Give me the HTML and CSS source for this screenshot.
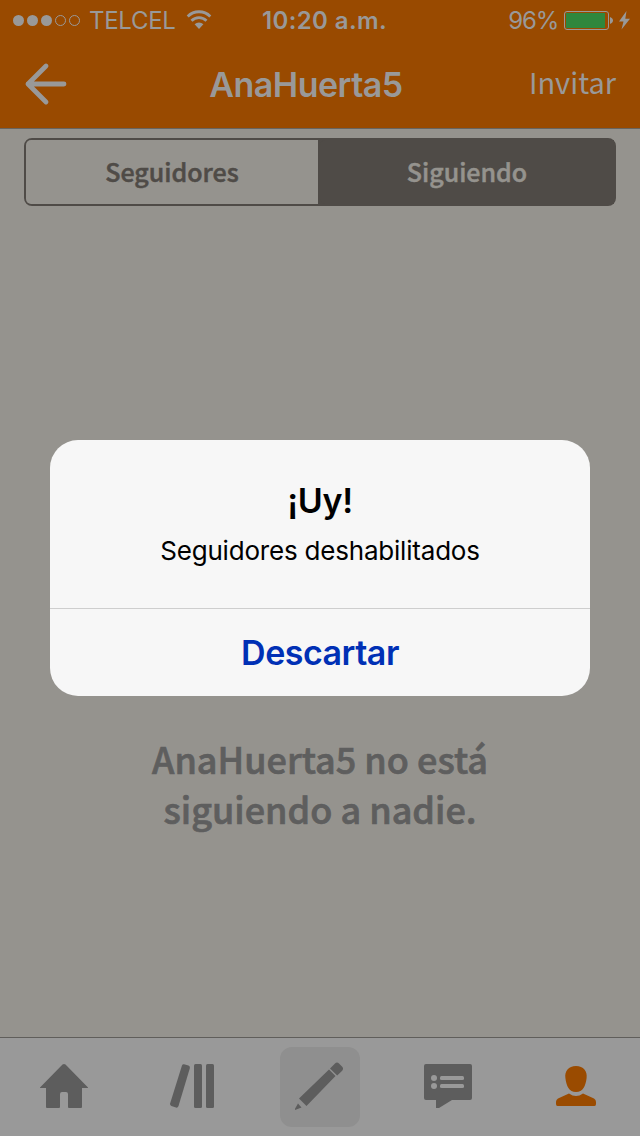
FILE: index.html
```html
<!DOCTYPE html>
<html lang="es">
<head>
<meta charset="utf-8">
<title>AnaHuerta5</title>
<link rel="stylesheet" href="styles.css">
</head>
<body>
<div class="screen">
  <header class="header">
    <div class="status">
      <div class="status-left">
        <svg class="signal" width="68" height="12" viewBox="0 0 68 12"><g fill="#999"><circle cx="5.5" cy="6.500" r="5.5"/><circle cx="19.5" cy="6.500" r="5.5"/><circle cx="33.5" cy="6.500" r="5.5"/></g><g fill="none" stroke="#999"><circle cx="47.5" cy="6.500" r="5"/><circle cx="61.5" cy="6.500" r="5"/></g></svg>
        <span class="carrier">TELCEL</span>
        <svg class="wifi" width="26" height="20" viewBox="0 0 26 20"><g fill="none" stroke="#999" stroke-width="2.800"><path d="M1.700 6.400a16 16 0 0 1 22.600 0"/><path d="M5.500 10.800a10.600 10.600 0 0 1 15 0"/></g><path fill="#999" d="M8.600 14.200a6.500 6.500 0 0 1 8.800 0L13 19z"/></svg>
      </div>
      <span class="clock">10:20 a.m.</span>
      <div class="status-right">
        <span class="percent">96%</span>
        <svg width="68" height="20" viewBox="0 0 68 20"><rect x=".5" y="1.5" width="44" height="18" rx="2.5" fill="none" stroke="#999"/><rect x="2" y="3" width="39" height="15" fill="#2f873d"/><path fill="#999" d="M46 7c4 1.500 4 5.500 0 7zM62.500 1 55 11.500h4.500L57.500 19.500 66 8.800h-4.700z"/></svg>
      </div>
    </div>
    <nav class="navbar">
      <svg class="back" width="42" height="42" viewBox="0 0 42 42"><path d="M22 3 4 21l18 18M4 21h36" fill="none" stroke="#999" stroke-width="4.800" stroke-linecap="round" stroke-linejoin="round"/></svg>
      <h1 class="title">AnaHuerta5</h1>
      <span class="invite">Invitar</span>
    </nav>
  </header>
  <main class="content">
    <div class="segments">
      <div class="segment"><span>Seguidores</span></div>
      <div class="segment active"><span>Siguiendo</span></div>
    </div>
    <p class="empty">AnaHuerta5 no está<br>siguiendo a nadie.</p>
  </main>
  <nav class="tabbar">
    <div class="tab"><svg width="48" height="46" viewBox="0 0 48 46"><path fill="#5d5d5d" d="M22.500 1.600q1.500-1.200 3 0L48 24.500v.5h-6v19q0 1-1 1H29q-1 0-1-1V31q0-2-2-2h-4q-2 0-2 2v13q0 1-1 1H7q-1 0-1-1V25H0v-.5z"/></svg></div>
    <div class="tab"><svg width="48" height="46" viewBox="0 0 48 46"><g fill="#5d5d5d"><rect x="26" y="1" width="8" height="44" rx="1.500"/><rect x="38" y="1" width="8" height="44" rx="1.500"/><path d="M14 2.500q.6-1.500 2-1.200l4.500 1.300q1.700.6 1.400 2.400L10.500 43q-.8 2-2.500 1.600l-4.600-1.500q-1.700-.8-1.300-2.500z"/></g></svg></div>
    <div class="tab compose-tab"><div class="compose"><svg width="80" height="80" viewBox="0 0 80 80"><g fill="#5d5d5d"><path d="M49 22.500 55.500 29 26.500 59 19 51.500zM50 21.500l5-5q2-2 4 0l3 3q2 2 .2 4.200l-5 4.900zM18 56.500l3.500 4L15 63v-1.200z"/></g></svg></div></div>
    <div class="tab"><svg width="48" height="46" viewBox="0 0 48 46"><path fill="#5d5d5d" d="M2 1h44q2 0 2 2v32q0 2-2 2H28L15 45h-3v-8H2q-2 0-2-2V3q0-2 2-2z"/><g fill="#999"><circle cx="10" cy="15" r="3"/><circle cx="10" cy="23" r="3"/><rect x="16" y="13" width="24" height="4" rx="1.500"/><rect x="16" y="21" width="24" height="4" rx="1.500"/></g></svg></div>
    <div class="tab"><svg width="40" height="46" viewBox="0 0 40 46"><path fill="#9a4b00" d="M20 3c7.500 0 11.500 5 10.600 12-1 8-3.600 14-10.600 14S10.400 23 9.400 15C8.500 8 12.500 3 20 3zM13 30.500q7 5 14 0l11 5q2 1.200 2 3.500v2q0 2-1.500 2h-37Q0 43 0 41v-2q0-2.300 2-3.500z"/></svg></div>
  </nav>
  <div class="dialog" role="alertdialog">
    <div class="dialog-body">
      <h2 class="dialog-title">¡Uy!</h2>
      <p class="dialog-text">Seguidores deshabilitados</p>
    </div>
    <div class="dialog-action"><span>Descartar</span></div>
  </div>
</div>
</body>
</html>
```
FILE: styles.css
```css
* { box-sizing: border-box; }
body { margin: 0; }
h1, h2, p { margin: 0; }
svg { display: block; overflow: visible; }
.screen { position: relative; width: 640px; height: 1136px; display: flex; flex-direction: column; background: #95938e; font-family: Inter, "Liberation Sans", sans-serif; white-space: nowrap; overflow: hidden; }
.header { height: 129px; flex: none; background: #994a00; border-bottom: 1px solid #68645f; color: #999; }
.status { height: 40px; padding: 0 8px 0 13px; display: grid; grid-template-columns: 1fr auto 1fr; align-items: center; font-size: 24px; line-height: 38px; }
.status-left, .status-right { display: flex; align-items: center; }
.status-right { justify-content: flex-end; gap: 6px; }
.carrier { padding-top: 2px; margin-left: 8px; width: 86px; letter-spacing: -.3px; }
.wifi { margin-left: 11px; }
.percent { padding-top: 2px; letter-spacing: -1.2px; }
.clock { padding: 2px 0 0 4px; font-weight: 600; letter-spacing: .4px; }
.navbar { height: 88px; padding: 0 24px; display: grid; grid-template-columns: 1fr auto 1fr; align-items: center; }
.title { margin-right: 28px; padding-top: 1px; font-size: 34px; line-height: 40px; font-weight: 600; letter-spacing: -.5px; }
.invite { margin-bottom: 6px; justify-self: end; font: 400 29px/40px "Noto Sans CJK JP", sans-serif; }
.content { flex: 1; padding: 9px 24px 0; font-family: "Noto Sans CJK JP", sans-serif; }
.segments { height: 68px; display: grid; grid-template-columns: 294px 1fr; border: 2px solid #4f4b47; border-radius: 8px; background: #4f4b47; font-size: 25px; font-weight: 500; line-height: 63px; text-align: center; color: #4f4b47; -webkit-text-stroke: .5px currentColor; }
.segment { background: #95938e; border-radius: 5px 0 0 5px; }
.segment:first-child { width: 292px; }
.segment.active { background: #4f4b47; color: #95938e; }
.empty { margin-top: 527px; font-size: 36px; line-height: 50px; font-weight: 500; text-align: center; color: #5e5e5e; -webkit-text-stroke: .7px currentColor; }
.tabbar { height: 99px; flex: none; display: grid; grid-template-columns: repeat(5, 128px); background: #999; border-top: 1px solid #605e5b; }
.tab { display: flex; align-items: center; justify-content: center; padding-bottom: 2px; }
.compose-tab { padding-bottom: 0; }
.compose { width: 80px; height: 80px; border-radius: 12px; background: #8f8f8f; }
.dialog { position: absolute; left: 50px; top: 440px; width: 540px; height: 256px; border-radius: 28px; background: #f7f7f7; text-align: center; display: flex; flex-direction: column; }
.dialog-body { height: 169px; flex: none; padding-top: 40px; border-bottom: 1px solid #cecece; color: #000; }
.dialog-title { font-size: 34px; line-height: 42px; font-weight: 600; letter-spacing: -.3px; }
.dialog-text { margin-top: 12px; font-size: 26px; line-height: 34px; letter-spacing: -.2px; }
.dialog-action { font-size: 34px; line-height: 88px; font-weight: 600; letter-spacing: -.5px; color: #0030b5; }
```
